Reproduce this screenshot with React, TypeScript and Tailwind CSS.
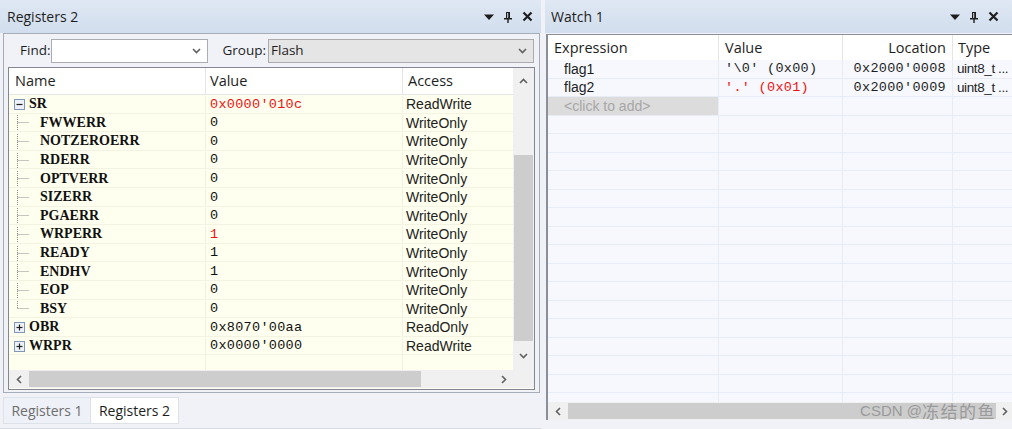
import React from "react";

type Reg = {
  name: string;
  value: string;
  access: string;
  kind: "open" | "closed" | "child" | "last";
  red?: boolean;
};

const regs: Reg[] = [
  { name: "SR", value: "0x0000'010c", access: "ReadWrite", kind: "open", red: true },
  { name: "FWWERR", value: "0", access: "WriteOnly", kind: "child" },
  { name: "NOTZEROERR", value: "0", access: "WriteOnly", kind: "child" },
  { name: "RDERR", value: "0", access: "WriteOnly", kind: "child" },
  { name: "OPTVERR", value: "0", access: "WriteOnly", kind: "child" },
  { name: "SIZERR", value: "0", access: "WriteOnly", kind: "child" },
  { name: "PGAERR", value: "0", access: "WriteOnly", kind: "child" },
  { name: "WRPERR", value: "1", access: "WriteOnly", kind: "child", red: true },
  { name: "READY", value: "1", access: "WriteOnly", kind: "child" },
  { name: "ENDHV", value: "1", access: "WriteOnly", kind: "child" },
  { name: "EOP", value: "0", access: "WriteOnly", kind: "child" },
  { name: "BSY", value: "0", access: "WriteOnly", kind: "last" },
  { name: "OBR", value: "0x8070'00aa", access: "ReadOnly", kind: "closed" },
  { name: "WRPR", value: "0x0000'0000", access: "ReadWrite", kind: "closed" },
];

const TitleIcons = () => (
  <div className="flex items-center gap-[9px] text-[#1e1e1e]">
    <svg width="10" height="10" viewBox="0 0 10 10">
      <path d="M0 2.5h10L5 8z" fill="currentColor" />
    </svg>
    <svg width="10" height="12" viewBox="0 0 10 12">
      <path d="M3 1h4v6h2v1.5H5.7V12H4.3V8.5H1V7h2z M4.2 2v5h1V2z" fill="currentColor" />
    </svg>
    <svg width="11" height="11" viewBox="0 0 11 11">
      <path d="M1.5 1.5l8 8M9.5 1.5l-8 8" stroke="currentColor" strokeWidth="2.2" />
    </svg>
  </div>
);

const Chevron = ({ dir, className = "" }: { dir: "up" | "down" | "left" | "right"; className?: string }) => {
  const d =
    dir === "up"
      ? "M1 6l3.5-3.5L8 6"
      : dir === "down"
      ? "M1 3l3.5 3.5L8 3"
      : dir === "left"
      ? "M6 1L2.5 4.5 6 8"
      : "M3 1l3.5 3.5L3 8";
  return (
    <svg width="9" height="9" viewBox="0 0 9 9" className={className}>
      <path d={d} fill="none" stroke="#606060" strokeWidth="1.6" />
    </svg>
  );
};

const Expander = ({ open }: { open: boolean }) => (
  <svg width="11" height="11" viewBox="0 0 11 11">
    <rect x="0.5" y="0.5" width="10" height="10" fill="#eef2f8" stroke="#7f98b8" />
    <path d="M2.5 5.5h6" stroke="#222" strokeWidth="1.2" />
    {!open && <path d="M5.5 2.5v6" stroke="#222" strokeWidth="1.2" />}
  </svg>
);

const TreeLine = ({ last }: { last: boolean }) => (
  <svg width="31" height="19" viewBox="0 0 31 19" className="shrink-0">
    <path
      d={last ? "M8.5 0v9.5M8.5 9.5h11" : "M8.5 0v19M8.5 9.5h11"}
      stroke="#8a8a8a"
      strokeWidth="1"
      strokeDasharray="1 1"
    />
  </svg>
);

const RegRow = ({ r }: { r: Reg }) => {
  const isChild = r.kind === "child" || r.kind === "last";
  return (
    <div className="flex h-[18.6px] border-b border-[#f3f3e2] bg-[#ffffef] pt-[1px] text-[14px] leading-none">
      <div className="flex w-[196px] items-center overflow-hidden">
        {isChild ? (
          <TreeLine last={r.kind === "last"} />
        ) : (
          <div className="flex w-[17px] shrink-0 justify-end pr-[1px]">
            <Expander open={r.kind === "open"} />
          </div>
        )}
        <span
          className={`font-['Liberation_Serif',serif] text-[14px] font-bold text-[#111] ${isChild ? "" : "pl-[3px]"}`}
        >
          {r.name}
        </span>
      </div>
      <div className="flex w-[197px] items-center border-l border-[#f1f1e0] pl-[4px]">
        <span
          className={`font-['Liberation_Mono',monospace] text-[13.5px] tracking-[0.3px] ${r.red ? "text-[#ee1111]" : "text-[#111]"}`}
        >
          {r.value}
        </span>
      </div>
      <div className="flex w-[110px] items-center border-l border-[#f1f1e0] pl-[3px] text-[#222]">
        {r.access}
      </div>
    </div>
  );
};

const RegistersPanel = () => (
  <div className="flex w-[541px] shrink-0 flex-col">
    <div className="flex h-[33px] items-center justify-between bg-gradient-to-b from-[#dfe8f4] to-[#d2deed] pl-[7px] pr-[8px]">
      <span className="text-[14px] text-[#1e1e1e]">Registers 2</span>
      <TitleIcons />
    </div>
    <div className="ml-[3px] mr-[1px] flex h-[360px] flex-col border border-[#a5adb8] bg-[#f0f2f8]">
      <div className="flex h-[33px] items-center pl-[16px] text-[13.5px] text-[#1e1e1e]">
        <span>Find:</span>
        <div className="ml-[1px] flex h-[24px] w-[157px] items-center justify-end border border-[#abadb3] bg-white pr-[6px]">
          <Chevron dir="down" />
        </div>
        <span className="ml-[14px]">Group:</span>
        <div className="ml-[2px] flex h-[24px] w-[266px] items-center justify-between border border-[#acacac] bg-[#e5e5e5] pl-[2px] pr-[6px]">
          <span>Flash</span>
          <Chevron dir="down" />
        </div>
      </div>
      <div className="ml-[4px] mr-[4px] flex h-[323px] flex-col border border-[#828790] bg-[#ffffef]">
        <div className="flex h-[302px]">
          <div className="flex w-[505px] flex-col">
            <div className="flex h-[27px] items-center border-b border-[#e6e6e6] bg-white text-[14.5px] text-[#1e1e1e]">
              <div className="w-[196px] pl-[6px]">Name</div>
              <div className="flex h-full w-[197px] items-center border-l border-[#e5e5e5] pl-[4px]">Value</div>
              <div className="flex h-full w-[110px] items-center border-l border-[#e5e5e5] pl-[5px]">Access</div>
            </div>
            <div className="font-['Liberation_Sans',Arial,sans-serif]">
              {regs.map((r) => (
                <RegRow key={r.name} r={r} />
              ))}
            </div>
            <div className="flex flex-1">
              <div className="w-[196px]" />
              <div className="w-[197px] border-l border-[#f1f1e0]" />
              <div className="w-[110px] border-l border-[#f1f1e0]" />
            </div>
          </div>
          <div className="flex w-[21px] flex-col bg-[#f0f0f0]">
            <div className="flex h-[26px] items-center justify-center">
              <Chevron dir="up" />
            </div>
            <div className="h-[61px]" />
            <div className="mx-[1px] h-[186px] bg-[#cdcdcd]" />
            <div className="flex flex-1 items-center justify-center">
              <Chevron dir="down" />
            </div>
          </div>
        </div>
        <div className="flex h-[18px]">
          <div className="flex w-[505px] items-center bg-[#f0f0f0]">
            <div className="flex w-[20px] justify-center">
              <Chevron dir="left" />
            </div>
            <div className="h-[16px] w-[392px] bg-[#cdcdcd]" />
            <div className="flex flex-1 justify-end pr-[5px]">
              <Chevron dir="right" />
            </div>
          </div>
          <div className="w-[21px] bg-[#f0f0f0]" />
        </div>
      </div>
    </div>
    <div className="flex h-[36px] items-start border-b border-[#d5dae3] bg-[#f0f2f8] pl-[3px] pt-[4px] text-[14px]">
      <div className="flex h-[27px] w-[88px] items-center justify-center border border-[#dde1e8] bg-[#eef1f8] text-[#6e6e6e]">
        Registers 1
      </div>
      <div className="flex h-[27px] w-[88px] items-center justify-center border-b border-r border-t border-[#dde1e8] bg-white text-[#1e1e1e]">
        Registers 2
      </div>
    </div>
  </div>
);

const watchRows = [
  { expr: "flag1", value: "'\\0' (0x00)", loc: "0x2000'0008", type: "uint8_t ...", red: false },
  { expr: "flag2", value: "'.' (0x01)", loc: "0x2000'0009", type: "uint8_t ...", red: true },
];

const WatchPanel = () => (
  <div className="flex min-w-0 flex-1 flex-col">
    <div className="flex h-[33px] items-center justify-between bg-gradient-to-b from-[#dfe8f4] to-[#d2deed] pl-[6px] pr-[13px]">
      <span className="text-[14px] text-[#1e1e1e]">Watch 1</span>
      <TitleIcons />
    </div>
    <div className="ml-[1px] mt-[1px] flex h-[386px] min-w-0 flex-col border-l-2 border-t border-[#8a8f98] bg-[#f6f8fd]">
      <div className="flex h-[25px] shrink-0 items-center overflow-hidden bg-white text-[14.5px] text-[#1e1e1e]">
        <div className="w-[170px] shrink-0 pl-[6px]">Expression</div>
        <div className="flex h-full w-[124px] shrink-0 items-center border-l border-[#e5e5e5] pl-[6px]">Value</div>
        <div className="flex h-full w-[110px] shrink-0 items-center justify-end border-l border-[#e5e5e5] pr-[6px]">
          Location
        </div>
        <div className="flex h-full min-w-0 flex-1 items-center border-l border-[#e5e5e5] pl-[5px]">Type</div>
      </div>
      <div className="flex-1 overflow-hidden font-['Liberation_Sans',Arial,sans-serif] text-[14px] leading-none">
        {watchRows.map((w) => (
          <div key={w.expr} className="flex h-[18.5px] border-b border-[#e8ecf4]">
            <div className="flex w-[170px] shrink-0 items-center pl-[16px] text-[#1e1e1e]">{w.expr}</div>
            <div
              className={`flex w-[124px] shrink-0 items-center border-l border-[#e8ecf4] pl-[6px] font-['Liberation_Mono',monospace] text-[13.5px] tracking-[0.3px] whitespace-pre ${w.red ? "text-[#ee1111]" : "text-[#1e1e1e]"}`}
            >
              {w.value}
            </div>
            <div className="flex w-[110px] shrink-0 items-center justify-end border-l border-[#e8ecf4] pr-[6px] font-['Liberation_Mono',monospace] text-[13.5px] tracking-[0.3px] text-[#1e1e1e]">
              {w.loc}
            </div>
            <div className="flex min-w-0 flex-1 items-center whitespace-nowrap border-l border-[#e8ecf4] pl-[4px] text-[13.5px] tracking-[-0.4px] text-[#1e1e1e]">
              {w.type}
            </div>
          </div>
        ))}
        <div className="flex h-[18.5px] border-b border-[#e8ecf4]">
          <div className="flex w-[170px] shrink-0 items-center bg-[#dcdcdc] pl-[16px] text-[#a6a6a6]">&lt;click to add&gt;</div>
          <div className="w-[124px] shrink-0 border-l border-[#e8ecf4]" />
          <div className="w-[110px] shrink-0 border-l border-[#e8ecf4]" />
          <div className="flex-1 border-l border-[#e8ecf4]" />
        </div>
        {Array.from({ length: 16 }).map((_, i) => (
          <div key={i} className="flex h-[18.5px] border-b border-[#e8ecf4]">
            <div className="w-[170px] shrink-0" />
            <div className="w-[124px] shrink-0 border-l border-[#e8ecf4]" />
            <div className="w-[110px] shrink-0 border-l border-[#e8ecf4]" />
            <div className="flex-1 border-l border-[#e8ecf4]" />
          </div>
        ))}
      </div>
      <div className="relative flex h-[18px] shrink-0 items-center bg-[#f0f0f0]">
        <div className="flex w-[20px] justify-center">
          <Chevron dir="left" />
        </div>
        <div className="h-[16px] flex-1 bg-[#cdcdcd]" />
        <div className="flex w-[16px] justify-center">
          <Chevron dir="right" />
        </div>
        <span className="absolute right-[16px] top-[-1px] flex items-center whitespace-nowrap leading-[20px] text-[#9a9a9a]">
          <span className="font-['Liberation_Sans',Arial,sans-serif] text-[15px]">CSDN @</span>
          <span className="font-['Noto_Sans_CJK_SC',sans-serif] text-[17px] tracking-[1.5px]">冻结的鱼</span>
        </span>
      </div>
    </div>
  </div>
);

export default function App() {
  return (
    <div className="flex h-[429px] w-[1012px] overflow-hidden bg-[#f0f2f8] font-['Open_Sans','Noto_Sans',sans-serif]">
      <RegistersPanel />
      <div className="w-[4px] shrink-0 bg-[#f0f2f8]" />
      <WatchPanel />
    </div>
  );
}
